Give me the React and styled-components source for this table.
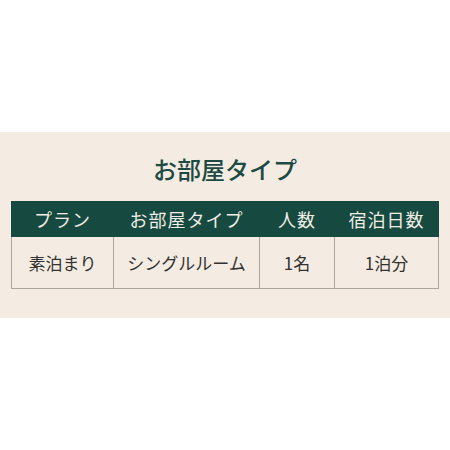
import React from "react";
import styled, { createGlobalStyle } from "styled-components";

const GlobalStyle = createGlobalStyle`
  html, body {
    margin: 0;
    padding: 0;
    background: #ffffff;
  }
  body {
    font-family: "Noto Sans CJK JP", "Noto Sans", sans-serif;
  }
`;

const Page = styled.div`
  width: 450px;
  height: 450px;
  display: flex;
  flex-direction: column;
  justify-content: center;
`;

const Band = styled.section`
  height: 186px;
  box-sizing: border-box;
  padding: 22px 11px 0 11px;
  background: #f4ece3;
`;

const Title = styled.h2`
  margin: 0 0 18px;
  text-align: center;
  font-size: 24px;
  line-height: 29px;
  font-weight: 500;
  color: #1d4a42;
`;

const Table = styled.table`
  width: 428px;
  border-collapse: collapse;
  table-layout: fixed;
`;

const HeadCell = styled.th`
  width: ${(p) => p.w}px;
  height: 34px;
  padding: 0;
  background: #164a41;
  color: #f1ede4;
  font-size: 18px;
  font-weight: 400;
  letter-spacing: 1px;
  text-align: center;
  border: 1px solid #164a41;
`;

const Cell = styled.td`
  height: 51px;
  padding: 0;
  color: #333230;
  font-size: 17px;
  text-align: center;
  border: 1px solid #aca79e;
`;

const columns = [
  { head: "プラン", value: "素泊まり", w: 101 },
  { head: "お部屋タイプ", value: "シングルルーム", w: 145 },
  { head: "人数", value: "1名", w: 74 },
  { head: "宿泊日数", value: "1泊分", w: 103 },
];

export default function App() {
  return (
    <>
      <GlobalStyle />
      <Page>
        <Band>
          <Title>お部屋タイプ</Title>
          <Table>
            <thead>
              <tr>
                {columns.map((c) => (
                  <HeadCell key={c.head} w={c.w}>
                    {c.head}
                  </HeadCell>
                ))}
              </tr>
            </thead>
            <tbody>
              <tr>
                {columns.map((c) => (
                  <Cell key={c.head}>{c.value}</Cell>
                ))}
              </tr>
            </tbody>
          </Table>
        </Band>
      </Page>
    </>
  );
}
